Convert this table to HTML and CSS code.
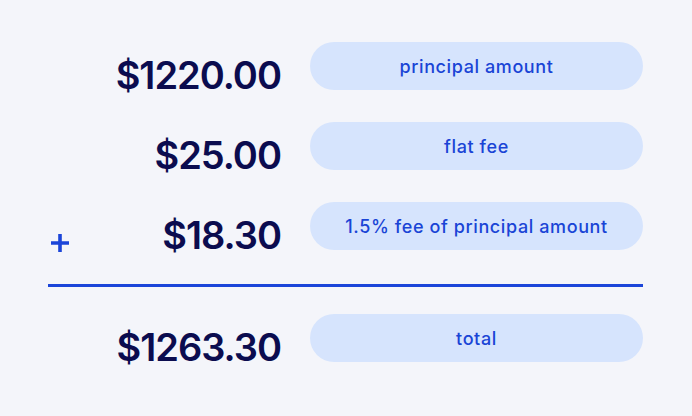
FILE: index.html
```html
<!DOCTYPE html>
<html>
<head>
<meta charset="utf-8">
<link rel="stylesheet" href="styles.css">
</head>
<body>
<main class="calc">
  <div class="row">
    <div class="amount"><span class="value">$1220.00</span></div>
    <div class="pill">principal amount</div>
  </div>
  <div class="row">
    <div class="amount"><span class="value">$25.00</span></div>
    <div class="pill">flat fee</div>
  </div>
  <div class="row">
    <div class="amount">
      <svg class="sign" width="20" height="20" viewBox="0 0 20 20" aria-label="plus"><path d="M10 1v18M1 10h18" stroke="#1b45d9" stroke-width="3.6" fill="none"/></svg>
      <span class="value">$18.30</span>
    </div>
    <div class="pill">1.5% fee of principal amount</div>
  </div>
  <hr class="rule">
  <div class="row">
    <div class="amount"><span class="value">$1263.30</span></div>
    <div class="pill">total</div>
  </div>
</main>
</body>
</html>
```

FILE: styles.css
```css
html, body {
  margin: 0;
  padding: 0;
  background: #f4f5fa;
}
body {
  width: 692px;
  height: 416px;
  font-family: Inter, "Noto Sans", sans-serif;
}
.calc {
  padding: 42px 49px 0 48px;
  display: flex;
  flex-direction: column;
  gap: 32px;
}
.row {
  display: grid;
  grid-template-columns: 233px 333px;
  column-gap: 29px;
  height: 48px;
}
.amount {
  display: flex;
  justify-content: flex-end;
  align-items: flex-end;
  color: #0b0c4f;
  font-size: 38px;
  font-weight: 600;
  letter-spacing: -1px;
}
.value {
  line-height: 1;
  margin-bottom: -4px;
}
.sign {
  margin-right: auto;
  margin-left: 2px;
  margin-bottom: -3px;
}
.pill {
  background: #d6e4fd;
  border-radius: 24px;
  color: #1a44d6;
  font-size: 18px;
  font-weight: 500;
  letter-spacing: 0.6px;
  padding-top: 1px;
  display: flex;
  align-items: center;
  justify-content: center;
}
.rule {
  margin: 2px 0 -5px;
  border: 0;
  height: 3px;
  background: #1b45d9;
}
```
